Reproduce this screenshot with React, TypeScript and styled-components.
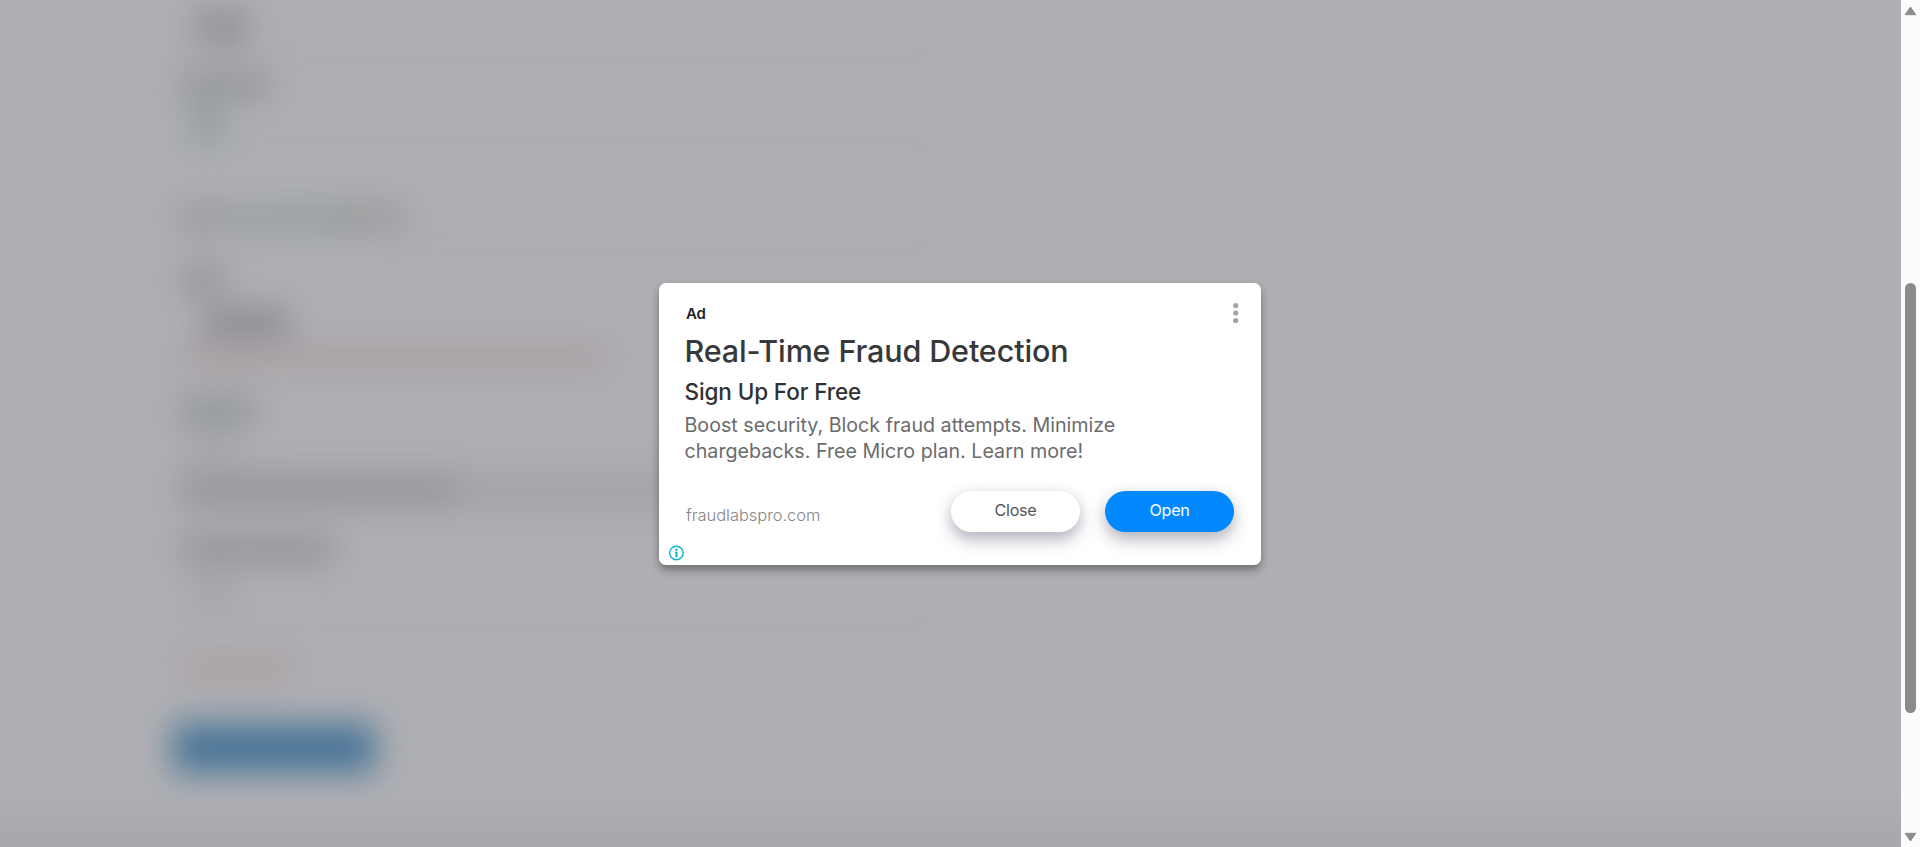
import React from "react";
import styled, { createGlobalStyle } from "styled-components";

const GlobalStyle = createGlobalStyle`
  * { box-sizing: border-box; }
  html, body { margin: 0; overflow: hidden; }
  body { font-family: Inter, Roboto, "Liberation Sans", sans-serif; }
`;

const Screen = styled.div`
  display: flex;
  width: 1920px;
  height: 847px;
  overflow: hidden;
`;

const Page = styled.main`
  position: relative;
  flex: 1;
  overflow: hidden;
  background: linear-gradient(#aeafb3 0, #aeafb3 792px, #a7a8ac 847px);
`;

const BlurredForm = styled.div`
  display: flex;
  flex-direction: column;
  width: 768px;
  margin-left: 178px;
  filter: blur(16px);
`;

const Row = styled.div<{ $h: number; $pad?: number; $line?: boolean; $fill?: string }>`
  display: flex;
  align-items: center;
  flex: none;
  height: ${(p) => p.$h}px;
  padding-left: ${(p) => p.$pad ?? 0}px;
  border-bottom: ${(p) => (p.$line ? "2px solid #9c9da1" : "0")};
  background: ${(p) => p.$fill ?? "transparent"};
`;

const Smudge = styled.span<{ $w: number; $h?: number; $c: string }>`
  flex: none;
  width: ${(p) => p.$w}px;
  height: ${(p) => p.$h ?? 18}px;
  background: ${(p) => p.$c};
`;

const SubmitShape = styled.div`
  width: 202px;
  height: 50px;
  margin: -1px 0 0 -5px;
  border-radius: 4px;
  background: #4b7698;
`;

const Overlay = styled.div`
  position: absolute;
  inset: 0;
  display: flex;
  justify-content: center;
  align-items: flex-start;
  padding: 283px 0 0 19px;
`;

const Card = styled.section`
  display: flex;
  flex-direction: column;
  width: 602px;
  height: 282px;
  padding: 19px 26px 0;
  border-radius: 7px;
  background: #fff;
  box-shadow: 0 5px 9px rgba(0, 0, 0, 0.36);
`;

const CardTop = styled.div`
  display: flex;
  justify-content: space-between;
  height: 27px;
`;

const AdLabel = styled.span`
  padding: 3px 0 0 1px;
  font-size: 15px;
  line-height: 18px;
  font-weight: 600;
  letter-spacing: -0.3px;
  color: #202124;
`;

const MenuIcon = styled.svg`
  width: 6px;
  height: 22px;
  margin-right: -4px;
`;

const Title = styled.h1`
  margin: 2px 0 0 -0.5px;
  font-size: 30.5px;
  line-height: 40px;
  font-weight: 500;
  letter-spacing: -0.12px;
  white-space: nowrap;
  color: #37383a;
`;

const Subtitle = styled.h2`
  margin: 5px 0 0 -0.5px;
  font-size: 22.5px;
  line-height: 32px;
  font-weight: 500;
  letter-spacing: -0.11px;
  color: #303134;
`;

const Description = styled.p`
  margin: 4px 0 0 -0.5px;
  font-size: 19.7px;
  line-height: 26px;
  letter-spacing: -0.01px;
  white-space: nowrap;
  color: #6b6b6d;
`;

const Actions = styled.div`
  display: flex;
  align-items: flex-start;
  height: 41px;
  margin-top: 27px;
`;

const Domain = styled.span`
  flex: 1;
  padding: 13px 0 0 1px;
  font-size: 16.5px;
  line-height: 22px;
  font-weight: 300;
  letter-spacing: -0.05px;
  color: #858587;
`;

const PillButton = styled.button<{ $primary?: boolean }>`
  width: 129px;
  height: 41px;
  margin-left: ${(p) => (p.$primary ? 25 : 0)}px;
  margin-right: ${(p) => (p.$primary ? 1 : 0)}px;
  padding: 0 0 3px;
  border: 0;
  border-radius: 21px;
  font: 400 16.2px Inter, Roboto, sans-serif;
  letter-spacing: -0.3px;
  color: ${(p) => (p.$primary ? "#fff" : "#555")};
  background: ${(p) => (p.$primary ? "#0188ff" : "#fff")};
  box-shadow: 0 8px 16px rgba(60, 64, 90, 0.36), 0 0 14px rgba(60, 64, 90, 0.07);
`;

const InfoIcon = styled.svg`
  width: 16px;
  height: 16px;
  margin: 13px 0 0 -17px;
`;

const Scrollbar = styled.aside`
  display: flex;
  flex-direction: column;
  align-items: center;
  width: 19px;
  padding: 5px 0 4px;
  background: #fcfcfc;
`;

const Arrow = styled.svg`
  width: 13px;
  height: 11px;
`;

const Thumb = styled.div`
  width: 11px;
  height: 430px;
  margin: 267px 0 auto;
  border-radius: 6px;
  background: #8b8b8b;
`;

export default function App() {
  return (
    <>
      <GlobalStyle />
      <Screen>
        <Page>
          <BlurredForm aria-hidden="true">
            <Row $h={56} $pad={16} $line><Smudge $w={56} $h={36} $c="#939497" /></Row>
            <Row $h={60} $pad={2}><Smudge $w={90} $h={22} $c="#8f9195" /></Row>
            <Row $h={16} $pad={12}><Smudge $w={34} $h={34} $c="#929c9f" /></Row>
            <Row $h={14} $line />
            <Row $h={54} />
            <Row $h={34} $pad={2}>
              <Smudge $w={228} $h={24} $c="linear-gradient(90deg, #959593, #9c9da1 20%, #949fa2 55%, #969796 75%, #9d9ea2)" />
            </Row>
            <Row $h={13} $line />
            <Row $h={66} $pad={2}><Smudge $w={44} $h={24} $c="#8f9194" /></Row>
            <Row $h={20} $pad={24}><Smudge $w={88} $h={28} $c="#8b8a92" /></Row>
            <Row $h={50} $pad={2}><Smudge $w={430} $h={24} $c="#aa9fa3" /></Row>
            <Row $h={58} $pad={2}><Smudge $w={76} $h={26} $c="#919496" /></Row>
            <Row $h={14} $pad={12}><Smudge $w={44} $h={14} $c="#9fa0a2" /></Row>
            <Row $h={11} />
            <Row $h={48} $pad={2} $fill="#a5a6a9"><Smudge $w={276} $h={28} $c="#96979b" /></Row>
            <Row $h={74} $pad={2}><Smudge $w={154} $h={26} $c="#929396" /></Row>
            <Row $h={12} $pad={14}><Smudge $w={42} $h={22} $c="#a1a2a4" /></Row>
            <Row $h={24} $line />
            <Row $h={88} $pad={2}><Smudge $w={114} $h={22} $c="#ac9ea1" /></Row>
            <Row $h={12} />
            <SubmitShape />
          </BlurredForm>
          <Overlay>
            <Card>
              <CardTop>
                <AdLabel>Ad</AdLabel>
                <MenuIcon viewBox="0 0 6 22" fill="#a1a3a6">
                  <circle cx="2.7" cy="3.5" r="2.6" />
                  <circle cx="2.7" cy="11" r="2.6" />
                  <circle cx="2.7" cy="18.5" r="2.6" />
                </MenuIcon>
              </CardTop>
              <Title>Real-Time Fraud Detection</Title>
              <Subtitle>Sign Up For Free</Subtitle>
              <Description>
                Boost security, Block fraud attempts. Minimize
                <br />
                chargebacks. Free Micro plan. Learn more!
              </Description>
              <Actions>
                <Domain>fraudlabspro.com</Domain>
                <PillButton>Close</PillButton>
                <PillButton $primary>Open</PillButton>
              </Actions>
              <InfoIcon viewBox="0 0 16 16">
                <circle cx="8.4" cy="8" r="6.8" fill="none" stroke="#14b3d3" strokeWidth="1.4" />
                <circle cx="8.4" cy="4.7" r="1.2" fill="#14b3d3" />
                <path d="M6.8 6.8h2.7v5.5H7.4V7.8h-.6z" fill="#14b3d3" />
              </InfoIcon>
            </Card>
          </Overlay>
        </Page>
        <Scrollbar>
          <Arrow viewBox="0 0 13 11"><path d="M6.5 2 11.8 9.7H1.2z" fill="#8b8b8b" stroke="#8b8b8b" strokeLinejoin="round" /></Arrow>
          <Thumb />
          <Arrow viewBox="0 0 13 11"><path d="M6.5 9 11.8 1.3H1.2z" fill="#8b8b8b" stroke="#8b8b8b" strokeLinejoin="round" /></Arrow>
        </Scrollbar>
      </Screen>
    </>
  );
}
